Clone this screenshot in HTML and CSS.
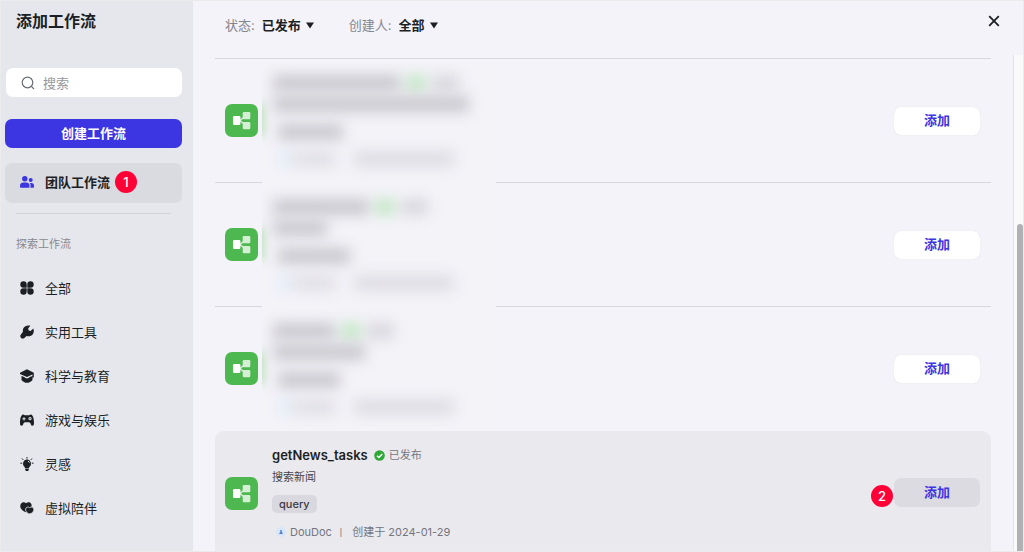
FILE: index.html
```html
<!DOCTYPE html>
<html lang="zh-CN">
	<head>
		<meta charset="utf-8">
		<title>添加工作流</title>
		<link rel="stylesheet" href="styles.css">
	</head>
	<body>
		<!-- shared shape for the workflow tiles -->
		<svg class="sprite" aria-hidden="true">
			<symbol id="flow" viewBox="0 0 33 33">
				<path d="M15 16.5L21 11.5M15 16.5L21 21.500" stroke="#d5efd5" stroke-width="1.500" fill="none" />
				<rect x="17.700" y="8" width="7.600" height="7.200" rx="1.200" fill="#d5efd5" />
				<rect x="17.700" y="18" width="7.600" height="7.200" rx="1.200" fill="#d5efd5" />
				<rect x="8" y="12" width="7.400" height="9" rx="1.200" fill="#fff" />
			</symbol>
		</svg>
		<div id="dialog">
			<aside id="sidebar">
				<h1>添加工作流</h1>
				<label id="search">
					<svg width="14" height="14" viewBox="0 0 14 14"><circle cx="6.500" cy="6.500" r="5.300" /><path d="M10.400 10.400L13 13" /></svg>
					<input type="text" placeholder="搜索" aria-label="搜索" />
				</label>
				<button id="create" type="button">创建工作流</button>
				<a class="item active" href="#team">
					<svg width="14" height="14" viewBox="0 0 14 14"><circle cx="4.800" cy="3.800" r="2.700" /><path d="M0 12V10.500C0 8.500 1.600 7.400 3.300 7.400H6.300C8 7.400 9.500 8.500 9.500 10.500V12C9.500 12.600 9.200 12.800 8.700 12.800H.8C.3 12.800 0 12.600 0 12Z" /><circle cx="10.700" cy="5" r="2" /><path d="M9.800 7.900H11.500C13 7.900 14 9 14 10.500V12C14 12.500 13.700 12.800 13.200 12.800H10.300C10.800 11 10.700 9 9.800 7.900Z" /></svg>
					<span>团队工作流</span>
					<b class="badge">1</b>
				</a>
				<hr>
				<h2>探索工作流</h2>
				<nav>
					<a class="item" href="#all">
						<svg width="14" height="14" viewBox="0 0 14 14"><path d="M3.500.3A3.200 3.200 0 1 0 3.500 6.700H6.700V3.500A3.200 3.200 0 0 0 3.500.3ZM10.500.3A3.200 3.200 0 0 0 7.300 3.500V6.700H10.500A3.200 3.200 0 1 0 10.500.3ZM3.500 7.300A3.200 3.200 0 1 0 6.700 10.500V7.300ZM7.300 7.300V10.500A3.200 3.200 0 1 0 10.500 7.300Z" /></svg>
						<span>全部</span>
					</a>
					<a class="item" href="#tools">
						<svg width="14" height="14" viewBox="0 0 14 14"><path d="M10.400.8C7.800-.1 4.800.7 3.500 3C2.800 4.200 2.700 5.500 3 6.700L.9 9.400C.1 10.300.1 11.900 1 12.900C1.900 13.800 3.500 13.800 4.400 13L6.500 11C8.900 11.700 11.400 11 12.800 9.200C14 7.600 14.100 5.200 13.300 3.400L10.600 6L8.600 5.400L8.200 3.300Z" /></svg>
						<span>实用工具</span>
					</a>
					<a class="item" href="#science">
						<svg width="14" height="14" viewBox="0 0 14 14"><path d="M7 .3L0 3.800V5L7 8L12.400 5.600V8.500H13.800V3.800ZM1.500 7V11C3 12.900 5 13.800 7 13.800S11 12.900 12.500 11V7L9.700 8.100C8.800 10 5.200 10 4.300 8.100Z" /></svg>
						<span>科学与教育</span>
					</a>
					<a class="item" href="#games">
						<svg width="14" height="14" viewBox="0 0 14 14"><path fill-rule="evenodd" d="M3.200 1.500C4.100 1.300 4.600 2.300 5.200 2.300H8.800C9.400 2.300 9.900 1.300 10.800 1.500C13.300 2 14 6 14 10.500C14 13.300 11.600 13.200 10.900 11.500C10.500 10.300 10 9.300 9 9.300H5C4 9.300 3.500 10.300 3.100 11.500C2.400 13.200 0 13.300 0 10.500C0 6 .7 2 3.200 1.500ZM3.500 4.200V5.300H2.400V6.300H3.500V7.400H4.500V6.300H5.600V5.300H4.500V4.200ZM10 4A1.600 1.600 0 1 0 10 7.200A1.600 1.600 0 0 0 10 4ZM10 5A.6.6 0 1 1 10 6.200A.6.6 0 0 1 10 5Z" /></svg>
						<span>游戏与娱乐</span>
					</a>
					<a class="item" href="#ideas">
						<svg width="14" height="14" viewBox="0 0 14 14"><path d="M7 2.200A4.400 4.400 0 0 0 4.600 10L5.200 11.400H8.800L9.400 10A4.400 4.400 0 0 0 7 2.200ZM5.200 12H8.800V13L8 13.900H6L5.200 13Z" /><path d="M7 0V1.500M2 1.500L3.200 2.900M12 1.500L10.800 2.900M.4 6.200H2.200M13.600 6.200H11.800" stroke="#1c1f23" /><path d="M8 4L9.500 5.600" stroke="#e6e7ed" /></svg>
						<span>灵感</span>
					</a>
					<a class="item" href="#company">
						<svg width="14" height="14" viewBox="0 0 14 14"><path d="M6.100 2.300C4.400.7 1.900 1.300.8 3C-.6 6 .7 8.800 5.500 11.300L10 9L11.500 5.500C12.100 3.300 10.800 1.500 9 1.300C7.900 1.200 6.800 1.600 6.100 2.300Z" /><path d="M9.700 6.700C8.400 5.400 6 6 5.600 8C5.300 10.200 7 12 9 13.100C12.300 12.500 14 10.500 13.900 8C13.500 5.800 11.100 5.400 9.700 6.700Z" stroke="#e6e7ed" stroke-width=".8" /></svg>
						<span>虚拟陪伴</span>
					</a>
				</nav>
			</aside>
			<main>
				<header>
					<div class="filter">
						<label for="status">状态:</label>
						<select id="status"><option>已发布</option></select>
						<svg width="8" height="7" viewBox="0 0 8 7"><path d="M0 .5H8L4 6.500Z" /></svg>
					</div>
					<div class="filter">
						<label for="creator">创建人:</label>
						<select id="creator"><option>全部</option></select>
						<svg width="8" height="7" viewBox="0 0 8 7"><path d="M0 .5H8L4 6.500Z" /></svg>
					</div>
					<button id="close" type="button" aria-label="关闭"><svg width="12" height="12" viewBox="0 0 12 12"><path d="M1.200 1.200L10.800 10.800M10.800 1.200L1.200 10.800" /></svg></button>
				</header>
				<div id="content">
					<div id="list">
						<article class="row first">
							<svg class="tile"><use href="#flow" /></svg>
							<div class="redacted">
								<div class="line"><i class="name"></i><i class="state"></i><i class="stateText"></i></div>
								<div class="line"><i class="desc"></i></div>
								<div class="line tagLine"><i class="param"></i></div>
								<div class="line metaLine"><i class="avatar"></i><i class="author"></i><i class="date"></i></div>
							</div>
							<button class="add" type="button">添加</button>
						</article>
						<article class="row second">
							<svg class="tile"><use href="#flow" /></svg>
							<div class="redacted">
								<div class="line"><i class="name"></i><i class="state"></i><i class="stateText"></i></div>
								<div class="line"><i class="desc"></i></div>
								<div class="line tagLine"><i class="param"></i></div>
								<div class="line metaLine"><i class="avatar"></i><i class="author"></i><i class="date"></i></div>
							</div>
							<button class="add" type="button">添加</button>
						</article>
						<article class="row third">
							<svg class="tile"><use href="#flow" /></svg>
							<div class="redacted">
								<div class="line"><i class="name"></i><i class="state"></i><i class="stateText"></i></div>
								<div class="line"><i class="desc"></i></div>
								<div class="line tagLine"><i class="param"></i></div>
								<div class="line metaLine"><i class="avatar"></i><i class="author"></i><i class="date"></i></div>
							</div>
							<button class="add" type="button">添加</button>
						</article>
						<article class="row hover">
							<svg class="tile"><use href="#flow" /></svg>
							<div class="details">
								<div class="heading">
									<h3>getNews_tasks</h3>
									<svg width="11" height="11" viewBox="0 0 11 11"><circle cx="5.500" cy="5.500" r="5.300" fill="#2fa836" /><path d="M3 5.700L4.900 7.500L8.200 3.900" stroke="#fff" stroke-width="1.500" fill="none" /></svg>
									<span>已发布</span>
								</div>
								<p>搜索新闻</p>
								<span class="tag">query</span>
								<div class="meta">
									<svg width="10" height="10" viewBox="0 0 10 10"><circle cx="5" cy="5" r="5" fill="#d6e6fb" /><circle cx="5" cy="4" r="1" fill="#5b7fc4" /><path d="M3 7L4.200 5H5.800L7 7Z" fill="#5b7fc4" /></svg>
									<span>DouDoc</span>
									<span class="bar">|</span>
									<span>创建于 2024-01-29</span>
								</div>
							</div>
							<div class="action">
								<b class="badge">2</b>
								<button class="add" type="button">添加</button>
							</div>
						</article>
					</div>
					<div id="scrollTrack"><div id="scrollThumb"></div></div>
				</div>
			</main>
		</div>
	</body>
</html>
```
FILE: styles.css
```css
* {
	box-sizing: border-box;
}
body {
	margin: 0;
	overflow: hidden;
	font-family: Inter, "Noto Sans CJK SC", sans-serif;
	font-size: 13px;
	line-height: 20px;
	color: #1c1f23;
}
h1, h2, h3, p {
	margin: 0;
}
button, input, select {
	font: inherit;
	border: 0;
	padding: 0;
}
a {
	color: inherit;
	text-decoration: none;
}
.sprite {
	display: none;
}
#dialog {
	display: flex;
	height: 100vh;
	border: 1px solid #ebebed;
	background-color: #f4f3f9;
}

#sidebar {
	display: flex;
	flex-direction: column;
	flex: none;
	width: 192px;
	padding: 8px 11px 0 4px;
	background-color: #e6e7ed;
	overflow: hidden;
}
#sidebar h1 {
	margin: 0 11px 35px;
	font-size: 16px;
	line-height: 24px;
	font-weight: 600;
}
#search {
	display: flex;
	align-items: center;
	gap: 8px;
	height: 29px;
	margin-left: 1px;
	padding: 0 15px;
	border-radius: 7px;
	background-color: white;
}
#search svg {
	flex: none;
	fill: none;
	stroke: #6b6d75;
	stroke-width: 1.2;
}
#search input {
	width: 100%;
	min-width: 0;
	background: none;
	outline: none;
}
#search input::placeholder {
	color: #96979c;
}
#create {
	height: 29px;
	margin: 22px 0 15px;
	padding-bottom: 1px;
	border-radius: 7px;
	background-color: #3c35e2;
	color: white;
	font-weight: 600;
}
.item {
	display: flex;
	align-items: center;
	height: 40px;
	padding-left: 15px;
	border-radius: 7px;
}
.item svg {
	margin-right: 11px;
	fill: #1c1f23;
}
.item.active {
	padding-bottom: 2px;
	background-color: #dadbe1;
	font-weight: 600;
}
.item.active svg {
	fill: #3c35e2;
}
.badge {
	width: 22px;
	height: 22px;
	border-radius: 50%;
	background-color: #ff0037;
	color: white;
	font-weight: 500;
	line-height: 22px;
	text-align: center;
}
.item .badge {
	margin-left: 5px;
}
#sidebar hr {
	width: 155px;
	margin: 10px 11px 20px;
	border: 0;
	border-top: 1px solid #d2d3d9;
}
#sidebar h2 {
	margin: 0 11px 14px;
	color: #88898f;
	font-size: 11px;
	font-weight: 400;
}
nav {
	display: flex;
	flex-direction: column;
	gap: 4px;
}
nav .item {
	padding-bottom: 1px;
}

main {
	display: flex;
	flex-direction: column;
	flex: 1;
	min-width: 0;
}
header {
	display: flex;
	flex: none;
	gap: 35px;
	height: 54px;
	padding: 13px 23px 0 32px;
}
.filter {
	display: flex;
	align-items: center;
	height: 22px;
}
.filter label {
	margin-right: 7px;
	color: #85868d;
}
.filter select {
	appearance: none;
	margin-right: 4px;
	background: none;
	color: #1c1f23;
	font-weight: 600;
}
.filter svg {
	fill: #1c1f23;
}
#close {
	width: 12px;
	height: 12px;
	margin: 1px 0 0 auto;
	background: none;
}
#close svg {
	display: block;
	stroke: #1c1f23;
	stroke-width: 1.8;
}
#content {
	display: flex;
	flex: 1;
	min-height: 0;
}
#list {
	flex: 1;
	min-width: 0;
	margin: 3px 22px 0;
	overflow: hidden;
}
.row {
	display: flex;
	align-items: center;
	height: 124px;
	padding: 0 11px 0 10px;
	border-top: 1px solid #d7d7dd;
}
.tile {
	flex: none;
	width: 33px;
	height: 33px;
	border-radius: 7px;
	background-color: #4db850;
}
.add {
	width: 86px;
	height: 28px;
	margin-left: auto;
	padding-bottom: 1px;
	border-radius: 7px;
	background-color: white;
	box-shadow: 0 0 1px #d0d0d8;
	color: #3c35e2;
	font-weight: 600;
}
.row.hover {
	align-items: flex-start;
	height: 136px;
	margin-top: 1px;
	border: 0;
	border-radius: 9px 9px 0 0;
	background-color: #eae9ee;
}
.hover .tile {
	margin-top: 46px;
}
.hover .add {
	height: 29px;
	background-color: #dcdbe1;
	box-shadow: none;
}
.details {
	padding: 14px 0 0 14px;
}
.heading, .meta {
	display: flex;
	align-items: center;
	color: #75767d;
	font-size: 11px;
}
.heading h3 {
	margin-right: 6px;
	color: #1c1f23;
	font-size: 13px;
	font-weight: 600;
}
.heading span {
	margin-left: 4px;
}
.details p {
	margin: 2px 0 8px;
	color: #45464d;
	font-size: 11px;
}
.tag {
	display: block;
	width: fit-content;
	padding: 0 7px;
	border-radius: 5px;
	background-color: #d9d8de;
	color: #393944;
	font-size: 11px;
	line-height: 18px;
	font-weight: 500;
}
.meta {
	gap: 4px;
	margin: 9px 0 0 4px;
}
.meta .bar {
	margin: 0 6px 0 4px;
	font-family: "Liberation Sans", sans-serif;
	font-size: 9px;
}
.action {
	position: relative;
	margin: 47px 0 0 auto;
}
.action .badge {
	position: absolute;
	top: 7px;
	left: -23px;
}

/* smudged details, bar widths differ per row */
.redacted {
	position: relative;
	align-self: stretch;
	width: 234px;
	margin: -1px 0 0 4px;
	padding: 14px 0 0 11px;
	background-color: #f4f3f8;
	overflow: hidden;
}
.first .redacted {
	margin-top: 5px;
	padding-top: 8px;
}
.redacted::before {
	content: "";
	position: absolute;
	top: 46px;
	left: -7px;
	width: 8px;
	height: 32px;
	background-color: #a9dcab;
	filter: blur(5px);
}
.first .redacted::before {
	top: 40px;
}
.line {
	display: flex;
	align-items: center;
	height: 21px;
	filter: blur(7px);
}
.line i {
	height: 16px;
	background-color: #c9c8ce;
}
.line .state {
	width: 18px;
	margin: 0 7px;
	background-color: #bfe6c2;
}
.line .stateText {
	width: 27px;
	background-color: #d8d7dd;
}
.tagLine {
	margin: 7px 0 6px 5px;
}
.metaLine {
	margin-left: 7px;
}
.metaLine .avatar {
	width: 8px;
	background-color: #dcebfb;
}
.metaLine .author {
	width: 44px;
	margin: 0 18px 0 4px;
	background-color: #e1e0e6;
}
.metaLine .date {
	width: 100px;
	background-color: #dedde3;
}
.first .name {
	width: 127px;
}
.first .desc {
	width: 196px;
}
.first .param {
	width: 65px;
}
.second .name {
	width: 96px;
}
.second .desc {
	width: 54px;
}
.second .param {
	width: 72px;
}
.third .name {
	width: 62px;
}
.third .desc {
	width: 92px;
}
.third .param {
	width: 62px;
}

#scrollTrack {
	flex: none;
	width: 10px;
	padding: 169px 0 0 3px;
	border-left: 1px solid #e3e3e6;
	background-color: #fafafa;
}
#scrollThumb {
	height: 100%;
	border-radius: 3px 3px 0 0;
	background-color: #b1b1b3;
}
```
